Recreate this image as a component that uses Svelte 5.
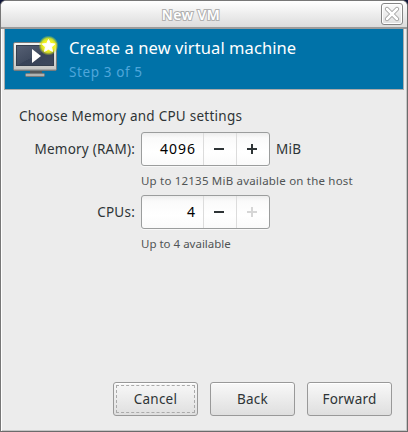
<script>
    let memory = 4096;
    let cpus = 4;
    const maxMemory = 12135;
    const maxCpus = 4;
</script>

<main class="window">
    <div class="titlebar">
        <span class="caption">New VM</span>
        <button class="close" aria-label="Close">
            <svg width="16" height="16" viewBox="0 0 16 16">
                <path d="M3 3L13 13M13 3L3 13" stroke="#999" stroke-width="4.2" stroke-linecap="round"/>
                <path d="M3 3L13 13M13 3L3 13" stroke="#fff" stroke-width="2.6" stroke-linecap="round"/>
            </svg>
        </button>
    </div>
    <header>
        <svg class="logo" width="48" height="48" viewBox="0 0 48 48">
            <defs>
                <radialGradient id="glow">
                    <stop offset="0.5" stop-color="#f4f41e"/>
                    <stop offset="0.72" stop-color="#e8ee1c" stop-opacity="0.85"/>
                    <stop offset="1" stop-color="#c8e028" stop-opacity="0"/>
                </radialGradient>
                <linearGradient id="screen" x2="1" y2="1">
                    <stop offset="0" stop-color="#566074"/>
                    <stop offset="0.5" stop-color="#414c60"/>
                    <stop offset="0.51" stop-color="#384358"/>
                    <stop offset="1" stop-color="#3d485d"/>
                </linearGradient>
                <linearGradient id="bezel" x2="0" y2="1">
                    <stop offset="0" stop-color="#f4f4f2"/>
                    <stop offset="1" stop-color="#c4c4c2"/>
                </linearGradient>
            </defs>
            <path d="M18 35h12v4H18z" fill="#55585a"/>
            <rect x="13.5" y="38.5" width="19" height="3" rx="1" fill="#b0b2b1" stroke="#777b7b"/>
            <rect x="1.5" y="7.5" width="43" height="28" rx="1.5" fill="url(#bezel)" stroke="#777b7c"/>
            <path d="M2 34.5h42" stroke="#a4a6a6"/>
            <rect x="4.5" y="10.5" width="37" height="20" fill="url(#screen)" stroke="#343e4d"/>
            <path d="M20 14v14l9-7z" fill="#fff"/>
            <circle cx="36.5" cy="10.5" r="10" fill="url(#glow)"/>
            <path d="M36.5 4.5l1.9 4 4.4.5-3.3 3 1 4.4-4-2.2-4 2.2 1-4.4-3.3-3 4.4-.5z" fill="#fff" stroke="#fff" stroke-linejoin="round"/>
        </svg>
        <div class="heading">
            <h1>Create a new virtual machine</h1>
            <p>Step 3 of 5</p>
        </div>
    </header>
    <section>
        <p class="intro">Choose Memory and CPU settings</p>
        <div class="row">
            <span class="label">Memory (RAM):</span>
            <div class="spin">
                <span class="value">{memory}</span>
                <button aria-label="Less memory"><svg width="12" height="12"><path d="M1 6h10" /></svg></button>
                <button aria-label="More memory"><svg width="12" height="12"><path d="M1 6h10M6 1v10" /></svg></button>
            </div>
            <span class="unit">MiB</span>
        </div>
        <p class="hint host">Up to {maxMemory} MiB available on the host</p>
        <div class="row">
            <span class="label">CPUs:</span>
            <div class="spin">
                <span class="value">{cpus}</span>
                <button aria-label="Fewer CPUs"><svg width="12" height="12"><path d="M1 6h10" /></svg></button>
                <button aria-label="More CPUs" disabled={cpus >= maxCpus}><svg width="12" height="12"><path d="M1 6h10M6 1v10" /></svg></button>
            </div>
        </div>
        <p class="hint">Up to {maxCpus} available</p>
    </section>
    <footer>
        <button class="action focused">Cancel</button>
        <button class="action">Back</button>
        <button class="action">Forward</button>
    </footer>
</main>

<style>
    :global(body) {
        margin: 0;
        background: #10163a;
    }

    .window {
        box-sizing: border-box;
        display: flex;
        flex-direction: column;
        width: 408px;
        height: 432px;
        border: 1px solid #777;
        border-right-color: #6b6b6b;
        border-bottom-color: #6b6b6b;
        border-radius: 6px 6px 0 0;
        background: #ececec;
        box-shadow: inset 1px 0 #fff, inset -1px -1px #c6c6c6;
        color: #2e3436;
        font-family: "Noto Sans", "Open Sans", sans-serif;
        font-size: 13.5px;
        letter-spacing: 0.22px;
        overflow: hidden;
    }

    h1, p {
        margin: 0;
        font-weight: 400;
        white-space: nowrap;
    }

    button {
        padding: 0;
        border: 0;
        background: none;
        color: inherit;
        font: inherit;
        letter-spacing: inherit;
    }

    svg {
        display: block;
        fill: none;
    }

    .titlebar {
        box-sizing: border-box;
        display: flex;
        align-items: center;
        height: 28px;
        padding: 0 4px 0 0;
        border-bottom: 2px solid #9b9b9b;
        background: linear-gradient(#fff, #dcdcdc);
    }

    .caption {
        flex: 1;
        color: #fff;
        font-size: 14px;
        font-weight: 600;
        line-height: 26px;
        letter-spacing: 0.4px;
        text-align: center;
        padding-top: 2px;
        -webkit-text-stroke: 2px #b0b0b0;
        paint-order: stroke fill;
    }

    .close {
        box-sizing: border-box;
        display: flex;
        align-items: center;
        justify-content: center;
        width: 22px;
        height: 22px;
        border: 1px solid #858585;
        border-radius: 3px;
        box-shadow: inset 0 0 0 1px #fff;
    }

    header {
        box-sizing: border-box;
        display: flex;
        height: 61px;
        margin: 0 3px;
        padding-left: 7px;
        border: 1px solid #aaa;
        border-top: 0;
        background: #0072a8;
        color: #fff;
    }

    .logo {
        margin-top: 6px;
    }

    .heading {
        padding: 6px 0 0 9px;
    }

    h1 {
        font-size: 16.5px;
        line-height: 26px;
        letter-spacing: 0.08px;
    }

    header p {
        color: #4fa6da;
        line-height: 23px;
        letter-spacing: 0.6px;
    }

    section {
        flex: 1;
        padding-top: 16px;
    }

    .intro {
        padding-left: 18px;
        line-height: 21px;
        letter-spacing: 0.25px;
        margin-bottom: 4px;
    }

    .row {
        display: flex;
        align-items: center;
        height: 36px;
    }

    .label {
        width: 134px;
        margin-right: 6px;
        line-height: 34px;
        text-align: right;
        white-space: nowrap;
    }

    .spin {
        box-sizing: border-box;
        display: flex;
        width: 129px;
        height: 34px;
        border: 1px solid #9b9d9d;
        border-radius: 3px;
        background: linear-gradient(#ededed, #fafafa 5px, #fff 60%, #fafafa);
        box-shadow: 0 1px #f8f8f8;
        color: #000;
    }

    .value {
        box-sizing: border-box;
        width: 61px;
        padding-right: 7px;
        font-size: 14px;
        line-height: 32px;
        letter-spacing: 1px;
        text-align: right;
    }

    .spin button {
        display: flex;
        box-sizing: border-box;
        align-items: center;
        justify-content: center;
        width: 33px;
        padding-right: 2px;
        border-left: 1px solid #dcdcdc;
        stroke: #2e3436;
        stroke-width: 2;
    }

    .spin button:disabled {
        stroke: #d6d6d6;
    }

    .unit {
        margin-left: 6px;
        line-height: 34px;
    }

    .hint {
        height: 27px;
        padding-left: 140px;
        color: #505455;
        font-size: 11.5px;
        line-height: 28px;
        letter-spacing: 0;
    }

    .host {
        letter-spacing: 0.2px;
    }

    footer {
        display: flex;
        justify-content: flex-end;
        gap: 12px;
        padding: 0 15px 15px 0;
    }

    .action {
        box-sizing: border-box;
        width: 85px;
        height: 34px;
        border: 1px solid #999;
        border-radius: 3px;
        background: linear-gradient(#f8f8f8, #dfdfdf);
        box-shadow: inset 0 1px #fff;
    }

    .focused {
        outline: 1px dashed #aaa;
        outline-offset: -4px;
    }
</style>
